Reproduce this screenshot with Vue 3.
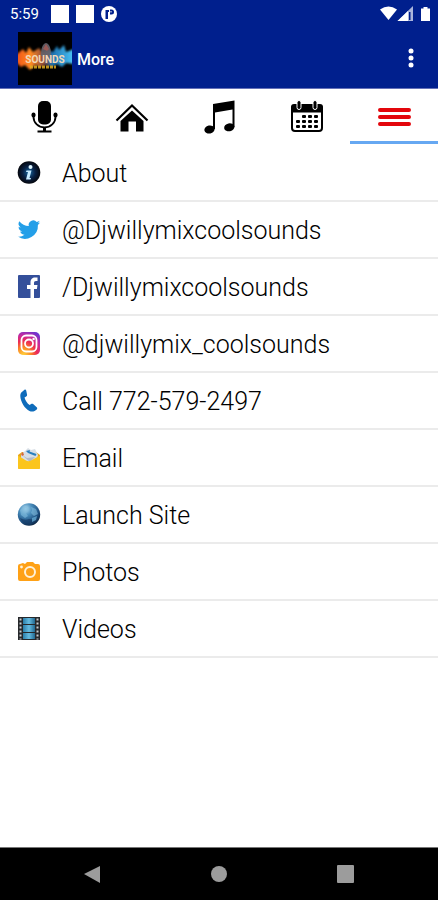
<script setup>
import { ref } from 'vue'

const tabs = [
  { id: 'live', label: 'Live' },
  { id: 'home', label: 'Home' },
  { id: 'music', label: 'Music' },
  { id: 'events', label: 'Events' },
  { id: 'more', label: 'More' },
]
const active = ref('more')

const items = [
  { icon: 'info', text: 'About' },
  { icon: 'twitter', text: '@Djwillymixcoolsounds' },
  { icon: 'facebook', text: '/Djwillymixcoolsounds' },
  { icon: 'instagram', text: '@djwillymix_coolsounds' },
  { icon: 'phone', text: 'Call 772-579-2497' },
  { icon: 'email', text: 'Email' },
  { icon: 'globe', text: 'Launch Site' },
  { icon: 'camera', text: 'Photos' },
  { icon: 'film', text: 'Videos' },
]
const calendarDots = [
  [13, 16], [19, 16], [25, 16],
  [7, 21], [13, 21], [19, 21], [25, 21],
  [7, 26], [13, 26], [19, 26], [25, 26],
]
</script>

<template>
  <div class="app">
    <header class="top">
      <div class="status">
        <span class="time">5:59</span>
        <span class="note"></span>
        <span class="note"></span>
        <svg class="badge" viewBox="0 0 16 16" width="16" height="16" aria-hidden="true">
          <circle cx="8" cy="8" r="8" fill="#fff" />
          <path d="M4.500 4H8v2H7v7H4.500z" fill="#001f8d" />
          <path d="M9 3.500h1.500a2.500 2.500 0 0 1 0 5H9z" fill="#001f8d" />
          <path d="M9.500 5h1v1.500h-1z" fill="#fff" />
        </svg>
        <svg class="signals" viewBox="0 0 50 16" width="50" height="16" aria-hidden="true">
          <path d="M0 3.500Q8.500-2.500 17 3.500L8.500 14z" fill="#fff" />
          <path d="M17.500 15L33 0v15z" fill="#aab5dc" />
          <path d="M17.500 15L28 5v10z" fill="#fff" />
          <path d="M29 6h1.500v8H29z" fill="#001f8d" />
          <path d="M41 2.500h2.500V1h4v1.500H50V15h-9z" fill="#fff" />
        </svg>
      </div>
      <div class="toolbar">
        <svg class="logo" viewBox="0 0 54 53" width="54" height="53" role="img" aria-label="Sounds logo">
          <defs>
            <linearGradient id="fire" x1="0" x2="1">
              <stop offset="0" stop-color="#f0521c" /><stop offset=".25" stop-color="#ff8a22" />
              <stop offset=".48" stop-color="#8c4a3a" /><stop offset=".62" stop-color="#1b6fae" />
              <stop offset="1" stop-color="#4cc5f8" />
            </linearGradient>
            <filter id="soft" x="-20%" y="-20%" width="140%" height="140%"><feGaussianBlur stdDeviation="1" /></filter>
          </defs>
          <rect width="54" height="53" />
          <path filter="url(#soft)" fill="url(#fire)" d="M-2 23l7-6 3 4 3-6 4 5 6-4 4 5 5-3 5 2 4-6 2 4 5-5 2 7 8-3v15l-8-1-4 4-5-3-5 3-6-2-6 2-5-2-5 5-5-5-4 2-5-5z" />
          <path d="M23 24c0-7 1-12 5-13 4 1 5 6 5 13z" fill="#66636a" opacity=".9" />
          <path d="M25 17l3-5 3 5-2 2z" fill="#b35a52" opacity=".7" />
          <path d="M12 35h26" stroke="#dfab20" stroke-width="3" stroke-dasharray="3 1" opacity=".85" />
          <text x="27" y="31" class="logo-main">SOUNDS</text>
        </svg>
        <h1>More</h1>
        <button class="overflow" aria-label="More options">
          <svg viewBox="0 0 6 20" width="6" height="20" fill="#fff" aria-hidden="true">
            <circle cx="3" cy="3" r="2.500" /><circle cx="3" cy="10" r="2.500" /><circle cx="3" cy="17" r="2.500" />
          </svg>
        </button>
      </div>
    </header>

    <nav class="tabs" aria-label="Sections">
      <button v-for="t in tabs" :key="t.id" :class="{ active: active === t.id }" :aria-label="t.label" @click="active = t.id">
        <svg viewBox="0 0 36 36" width="36" height="36" aria-hidden="true">
          <g v-if="t.id === 'live'">
            <rect x="12" y="2" width="13" height="23.500" rx="5" />
            <path d="M7.500 15v3a11 10.500 0 0 0 22 0v-3" fill="none" stroke="#000" stroke-width="1.800" />
            <rect x="5.500" y="13.500" width="4" height="5" rx="2" /><rect x="27.500" y="13.500" width="4" height="5" rx="2" />
            <path d="M17 28h3v3.500h5.500v2h-14v-2H17z" />
          </g>
          <g v-else-if="t.id === 'home'">
            <path d="M3.500 21.500L19 6.500l15.500 15" fill="none" stroke="#000" stroke-width="2.200" />
            <path d="M19 11.500L30.500 22v10.500H23V22.500h-7.500v10h-8V22z" />
          </g>
          <g v-else-if="t.id === 'music'">
            <path d="M12 5L33.500 1.500V28h-2V10.500L14 13.500V30h-2z" />
            <ellipse cx="8.500" cy="30.500" rx="5.200" ry="4" transform="rotate(-12 8.500 30.500)" />
            <ellipse cx="28.300" cy="28.300" rx="5.200" ry="4" transform="rotate(-12 28.300 28.300)" />
          </g>
          <g v-else-if="t.id === 'events'">
            <rect x="3" y="7" width="30" height="25" rx="3" fill="#fff" stroke="#000" stroke-width="2" />
            <path d="M2 13.500V8q0-3 3-3h26q3 0 3 3v5.500z" />
            <rect x="8" y="1.500" width="4" height="9" rx="2" stroke="#fff" />
            <rect x="24" y="1.500" width="4" height="9" rx="2" stroke="#fff" />
            <rect v-for="(d, i) in calendarDots" :key="i" :x="d[0]" :y="d[1]" width="4" height="3" rx="1" />
          </g>
          <path v-else d="M4 11h29M4 18h29M4 25h29" stroke="#e3060c" stroke-width="4" stroke-linecap="round" />
        </svg>
      </button>
    </nav>

    <main>
      <ul class="list">
        <li v-for="item in items" :key="item.text">
          <a href="#">
            <svg viewBox="0 0 24 24" width="24" height="24" aria-hidden="true">
              <g v-if="item.icon === 'info'">
                <defs><radialGradient id="inf"><stop offset="0" stop-color="#17669f" /><stop offset=".55" stop-color="#071f42" /><stop offset="1" stop-color="#05070d" /></radialGradient></defs>
                <circle cx="12" cy="11.500" r="11.300" fill="url(#inf)" />
                <circle cx="13.500" cy="6" r="2" fill="#dff6ff" />
                <path d="M9.500 9.500h5l-2 7.500h1.500l-.5 1.500H9l2-7.500H9z" fill="#c5eaff" />
              </g>
              <path v-else-if="item.icon === 'twitter'" fill="#249fe8" d="M23.200 4.600a9 9 0 0 1-2.600.7 4.600 4.600 0 0 0 2-2.500 9 9 0 0 1-2.900 1.100 4.600 4.600 0 0 0-7.900 4.200A13 13 0 0 1 2.300 3.300a4.600 4.600 0 0 0 1.400 6.100 4.600 4.600 0 0 1-2.100-.6 4.600 4.600 0 0 0 3.700 4.600 4.600 4.600 0 0 1-2.100.1 4.600 4.600 0 0 0 4.300 3.200A9.200 9.200 0 0 1 .8 18.600 13 13 0 0 0 20.900 7z" />
              <g v-else-if="item.icon === 'facebook'">
                <rect x="1" y="0" width="22" height="23" rx="1" fill="#344f9a" />
                <path fill="#fff" d="M13.500 23v-9H10v-4h3.500V7.500C13.500 4 15.500 2.500 18 2.500h2.500V6H19c-1.500 0-2 .8-2 2.300V10h3.500l-.6 4H17v9z" />
              </g>
              <g v-else-if="item.icon === 'instagram'">
                <defs>
                  <radialGradient id="ig" cx=".25" cy="1" r="1.100"><stop offset="0" stop-color="#ffd33c" /><stop offset=".3" stop-color="#fb8a25" /><stop offset=".55" stop-color="#ee2c52" /><stop offset=".78" stop-color="#c72a9d" /><stop offset="1" stop-color="#6d35d0" /></radialGradient>
                </defs>
                <rect x="1" y="0" width="22" height="23" rx="5" fill="url(#ig)" />
                <g fill="none" stroke="#fff" stroke-width="1.800"><rect x="4.500" y="3.500" width="15" height="16" rx="4.500" /><circle cx="12" cy="11.500" r="4" /></g>
                <circle cx="16.600" cy="7" r="1.200" fill="#fff" />
              </g>
              <path v-else-if="item.icon === 'phone'" fill="#0f6cbb" d="M4.300 3.500L7.500.7c.8-.5 1.500 0 1.700.8l.9 4.200c.1.800-.2 1.300-.9 1.700l-1.700 1c.8 3 2.800 6 5.200 7.700l1.400-1.100c.7-.5 1.400-.5 2 0l3.600 3.200c.7.700.7 1.500 0 2.200-1.600 1.700-4.600 2.700-7.200 1.500C8 20 3.500 13 3.300 7c0-1.500.3-2.700 1-3.500z" />
              <g v-else-if="item.icon === 'email'">
                <path d="M1 9l4-3h14l4 3v12.500q0 1.500-1.500 1.500h-19Q1 23 1 21.500z" fill="#e7a619" />
                <path d="M4 8l4-3 3-3 3 2 4-1 2 4 1 2-2 7-8 2-7-5z" fill="#d8dfe6" />
                <path d="M9 5l4-1-.5 1.500 7 2.500-1 2L11 7z" fill="#2a7fbd" />
                <path d="M5 9l5 3 8-1-5 5z" fill="#b3bbc8" />
                <path d="M1 9.500l8 5q2.500 1.500 5 0l9-5v12q0 1.500-1.500 1.500h-19Q1 23 1 21.500z" fill="#fbc51d" />
                <path d="M4 8l2-2 1 3-2 1z" fill="#d56a3c" />
              </g>
              <g v-else-if="item.icon === 'globe'">
                <defs><radialGradient id="gl" cx=".35" cy=".25" r=".8"><stop offset="0" stop-color="#b6def2" /><stop offset=".35" stop-color="#4b8fbe" /><stop offset=".75" stop-color="#1d4f80" /><stop offset="1" stop-color="#0d2440" /></radialGradient></defs>
                <circle cx="12" cy="11.500" r="11.200" fill="url(#gl)" />
                <path d="M3 7q4-4 7-3l2 3-3 3 2 3-3 2-4-3zM14 4l5 2 2 5-4 2-3-3 1-3z" fill="#80bbdc" opacity=".6" />
                <path d="M3 15q5 3 9 1l7 1q-3 5-8 5-5-1-8-7z" fill="#153a66" opacity=".65" />
                <path d="M15 15l5-2-1 4-4 2z" fill="#6eb4dc" opacity=".7" />
              </g>
              <g v-else-if="item.icon === 'camera'">
                <path d="M3 4l3-1 2 1 2-2h6l2 2h3q2 0 2 2v13q0 2-2 2H3q-2 0-2-2V6q0-2 2-2z" fill="#ffa116" />
                <circle cx="13" cy="12" r="5" fill="none" stroke="#fff1d8" stroke-width="2" />
                <circle cx="4.500" cy="7" r="1.400" fill="#fff1d8" />
              </g>
              <g v-else>
                <defs><linearGradient id="fl" x1="0" x2="1"><stop offset="0" stop-color="#2b7ea9" /><stop offset=".5" stop-color="#66bce1" /><stop offset="1" stop-color="#216890" /></linearGradient></defs>
                <rect x="1" width="22" height="23" fill="#26282b" />
                <rect x="6" y="1" width="12" height="6" fill="url(#fl)" /><rect x="6" y="8" width="12" height="7" fill="url(#fl)" /><rect x="6" y="16" width="12" height="6" fill="url(#fl)" />
                <path d="M3.500 1.500v21M20.500 1.500v21" stroke="#c9cccf" stroke-width="2" stroke-dasharray="2 2" />
              </g>
            </svg>
            <span>{{ item.text }}</span>
          </a>
        </li>
      </ul>
    </main>

    <footer class="system">
      <button aria-label="Back"><svg viewBox="0 0 18 18" width="18" height="18" aria-hidden="true"><path d="M1 9L17 1v17z" /></svg></button>
      <button aria-label="Home"><svg viewBox="0 0 18 18" width="18" height="18" aria-hidden="true"><circle cx="9" cy="9" r="8" /></svg></button>
      <button aria-label="Recent apps"><svg viewBox="0 0 18 18" width="18" height="18" aria-hidden="true"><rect width="17" height="18" rx="1" /></svg></button>
    </footer>
  </div>
</template>

<style>
body { margin: 0; background: #fff; }
</style>

<style scoped>
.app { min-height: 100vh; display: flex; flex-direction: column; font-family: Roboto, "Liberation Sans", sans-serif; color: #000; }
button { border: 0; padding: 0; margin: 0; background: none; cursor: pointer; }
svg { display: block; flex: none; }
.top { background: #001f8d; color: #fff; border-bottom: 1px solid #6470b8; }
.status { display: flex; align-items: center; height: 28px; padding: 0 8px 0 10px; }
.time { font-size: 15px; line-height: 28px; margin-right: 12px; }
.note { width: 18px; height: 18px; background: #fff; margin-right: 7px; }
.signals { margin-left: auto; }
.toolbar { display: flex; align-items: center; height: 60px; padding: 0 16px 0 18px; }
.logo-main { font: 700 10px Roboto, sans-serif; fill: #f0d8b8; text-anchor: middle; }
h1 { margin: 0 0 0 5px; padding-top: 3px; font-size: 16px; line-height: 20px; font-weight: 500; }
.overflow { margin-left: auto; padding: 8px; }
.tabs { display: flex; height: 55px; }
.tabs button { flex: 1; display: flex; align-items: center; justify-content: center; border-top: 3px solid transparent; border-bottom: 3px solid transparent; }
.tabs .active { border-bottom-color: #66a8f2; }
main { flex: 1; }
.list { list-style: none; margin: 0; padding: 1px 0 0; }
li { border-bottom: 2px solid #ebebeb; }
a { display: flex; align-items: center; gap: 21px; height: 55px; padding: 0 17px; color: inherit; text-decoration: none; font-size: 25px; line-height: 32px; font-weight: 300; }
a span { padding-top: 3px; }
.system { display: flex; justify-content: space-around; align-items: center; height: 52px; padding: 0 29px; background: #000; border-top: 1px solid #777; }
.system svg { fill: #9c9c9c; }
</style>
